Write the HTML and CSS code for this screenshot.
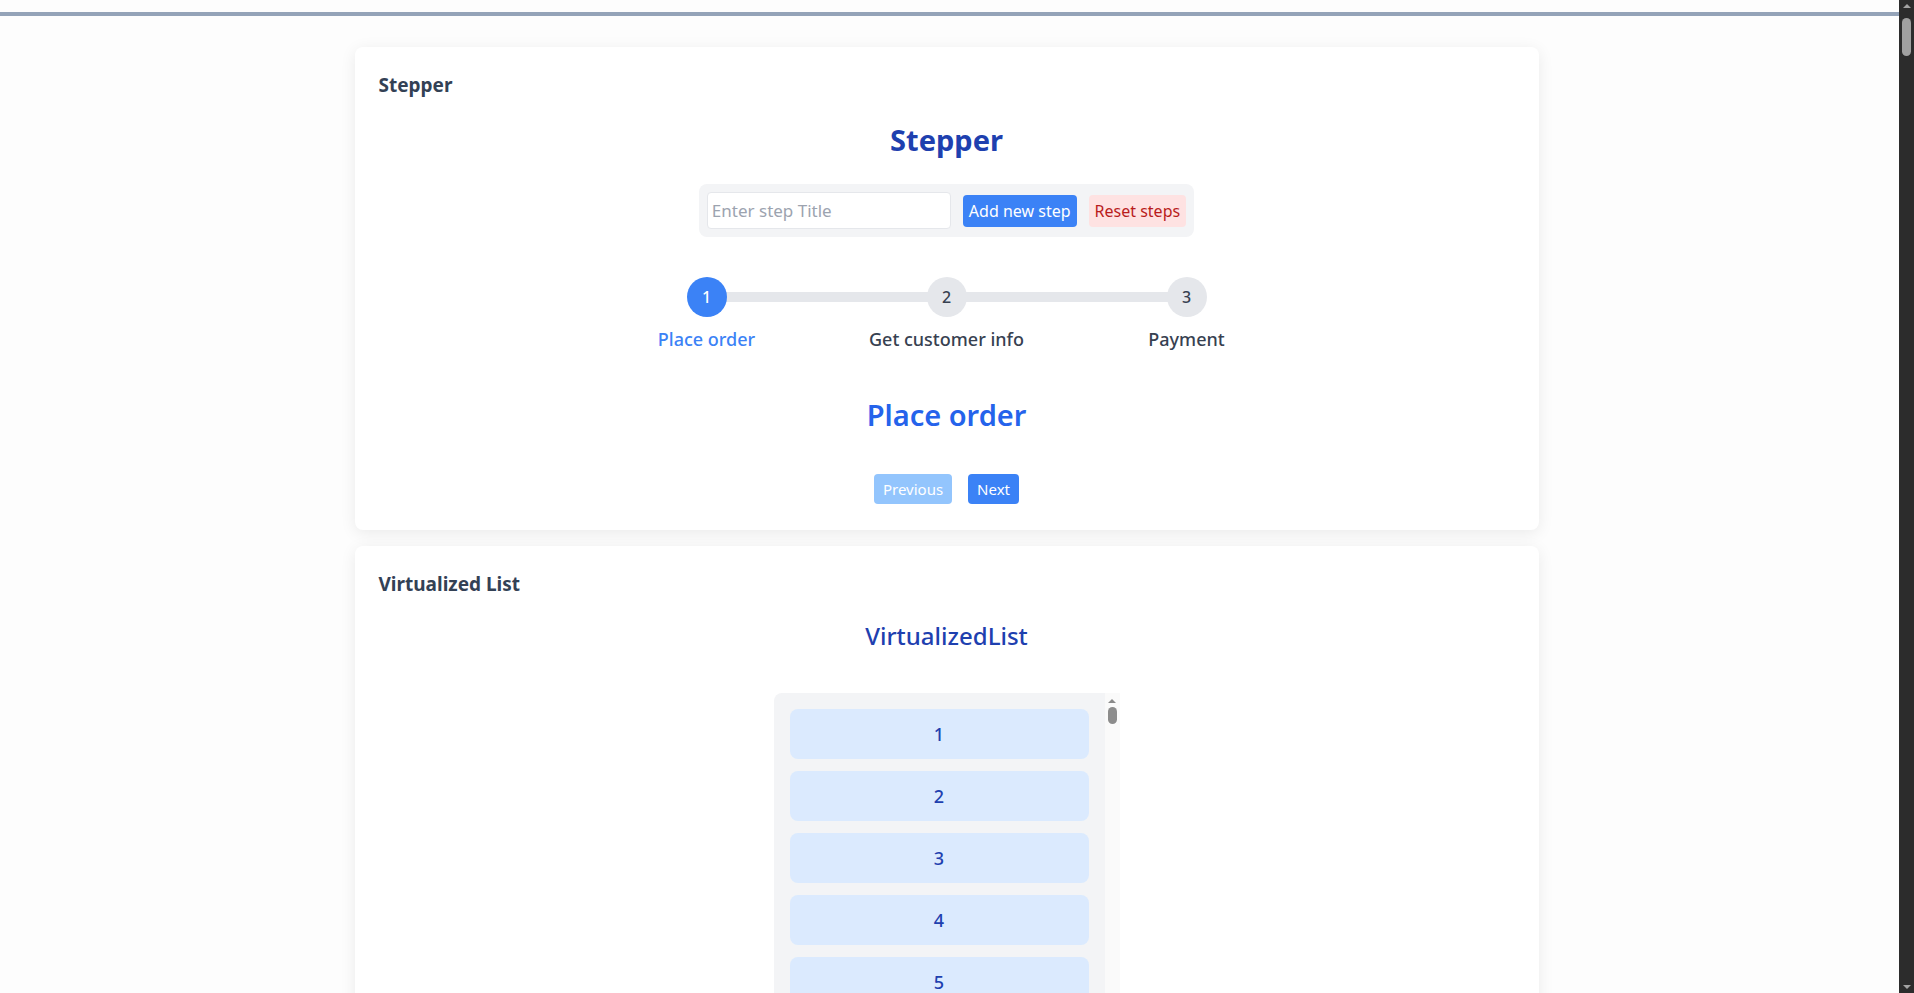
FILE: index.html
```html
<!DOCTYPE html>
<html lang="en">
<head>
<meta charset="utf-8">
<title>Components</title>
<link rel="stylesheet" href="styles.css">
</head>
<body>
<div class="topbar"></div>
<main class="container">
  <section class="card">
    <h2 class="card-label">Stepper</h2>
    <h1 class="demo-title">Stepper</h1>
    <div class="add-bar">
      <input class="step-input" type="text" placeholder="Enter step Title">
      <button class="btn btn-primary">Add new step</button>
      <button class="btn btn-reset">Reset steps</button>
    </div>
    <ol class="steps">
      <li class="step active"><span class="step-num">1</span><span class="step-label">Place order</span></li>
      <li class="step"><span class="step-num">2</span><span class="step-label">Get customer info</span></li>
      <li class="step"><span class="step-num">3</span><span class="step-label">Payment</span></li>
    </ol>
    <h2 class="step-content">Place order</h2>
    <div class="nav">
      <button class="btn btn-nav btn-disabled">Previous</button>
      <button class="btn btn-nav btn-primary">Next</button>
    </div>
  </section>
  <section class="card">
    <h2 class="card-label">Virtualized List</h2>
    <h2 class="vl-title">VirtualizedList</h2>
    <div class="vlist">
      <div class="vlist-items">
        <div class="item">1</div>
        <div class="item">2</div>
        <div class="item">3</div>
        <div class="item">4</div>
        <div class="item">5</div>
        <div class="item">6</div>
        <div class="item">7</div>
        <div class="item">8</div>
      </div>
      <div class="vscroll">
        <span class="vscroll-up"></span>
        <span class="vscroll-thumb"></span>
      </div>
    </div>
  </section>
</main>
<div class="page-scrollbar">
  <span class="psb-up"></span>
  <span class="psb-thumb"></span>
  <span class="psb-down"></span>
</div>
</body>
</html>
```
FILE: styles.css
```css
body {
  margin: 0 15px 0 0;
  background: #fdfdfd;
  font-family: "Noto Sans", "Open Sans", sans-serif;
  color: #374151;
}

.topbar {
  height: 4px;
  margin-top: 12px;
  background: #94a3b8;
}

.container {
  width: 1184px;
  margin: 0 auto 0 calc(50% - 595px);
  padding: 31px 0 40px;
  display: flex;
  flex-direction: column;
  gap: 16px;
}

.card {
  background: #ffffff;
  border-radius: 8px;
  box-shadow: 0 3px 16px rgba(0, 0, 0, 0.08);
  padding: 24px 24px 26px;
}

.card-label {
  margin: 0;
  font-size: 19px;
  line-height: 28px;
  font-weight: 700;
  color: #334155;
}

.demo-title {
  margin: 23px 0 0;
  text-align: center;
  font-size: 29px;
  line-height: 36px;
  font-weight: 700;
  color: #1e40af;
}

.add-bar {
  display: flex;
  align-items: center;
  gap: 12px;
  width: fit-content;
  margin: 26px auto 0;
  padding: 8px;
  background: #f3f4f6;
  border-radius: 8px;
}

.step-input {
  width: 244px;
  height: 37px;
  box-sizing: border-box;
  padding: 0 4px;
  border: 1px solid #e5e7eb;
  border-radius: 4px;
  background: #ffffff;
  color: #111827;
  font-family: inherit;
  font-size: 17px;
  outline: none;
}

.step-input::placeholder {
  color: #9ca3af;
}

.btn {
  font-family: inherit;
  font-size: 16px;
  height: 32px;
  padding: 0 6px;
  border: 0;
  border-radius: 4px;
  cursor: pointer;
}

.btn-primary {
  background: #3b82f6;
  color: #ffffff;
}

.btn-reset {
  background: #fee2e2;
  color: #b91c1c;
}

.btn-disabled {
  background: #93c5fd;
  color: #ffffff;
}

.steps {
  list-style: none;
  margin: 40px auto 0;
  padding: 0;
  width: 720px;
  display: flex;
}

.step {
  flex: 1;
  position: relative;
  display: flex;
  flex-direction: column;
  align-items: center;
  gap: 8px;
}

.step:not(:last-child)::after {
  content: "";
  position: absolute;
  top: 15px;
  left: 50%;
  width: 100%;
  height: 10px;
  background: #e5e7eb;
}

.step-num {
  position: relative;
  z-index: 1;
  width: 40px;
  height: 40px;
  border-radius: 50%;
  background: #e5e7eb;
  color: #374151;
  display: flex;
  align-items: center;
  justify-content: center;
  font-size: 16px;
  font-weight: 500;
}

.step-label {
  font-size: 18px;
  line-height: 28px;
  font-weight: 500;
  color: #374151;
}

.step.active .step-num {
  background: #3b82f6;
  color: #ffffff;
}

.step.active .step-label {
  color: #3b82f6;
}

.step-content {
  margin: 42px 0 0;
  text-align: center;
  font-size: 29px;
  line-height: 40px;
  font-weight: 600;
  color: #2563eb;
}

.nav {
  display: flex;
  justify-content: center;
  gap: 16px;
  margin-top: 39px;
}

.btn-nav {
  height: 30px;
  font-size: 15px;
  padding: 0 9px;
}

.vl-title {
  margin: 22px 0 0;
  text-align: center;
  font-size: 24px;
  line-height: 32px;
  font-weight: 500;
  color: #1e40af;
}

.vlist {
  width: 346px;
  height: 500px;
  margin: 41px auto 0;
  display: flex;
}

.vlist-items {
  flex: 1;
  overflow: hidden;
  box-sizing: border-box;
  padding: 16px;
  background: #f3f4f6;
  border-radius: 8px 0 0 0;
  display: flex;
  flex-direction: column;
  gap: 12px;
}

.item {
  flex: 0 0 50px;
  display: flex;
  align-items: center;
  justify-content: center;
  background: #dbeafe;
  border-radius: 8px;
  color: #1e40af;
  font-size: 18px;
  font-weight: 500;
}

.vscroll {
  width: 15px;
  background: #fafafa;
  display: flex;
  flex-direction: column;
  align-items: center;
  padding-top: 6px;
  gap: 4px;
}

.vscroll-up {
  width: 0;
  height: 0;
  border-left: 4px solid transparent;
  border-right: 4px solid transparent;
  border-bottom: 4px solid #8a8a8a;
}

.vscroll-thumb {
  width: 9px;
  height: 17px;
  border-radius: 5px;
  background: #8c8c8c;
}

.page-scrollbar {
  position: fixed;
  top: 0;
  right: 0;
  width: 15px;
  height: 100vh;
  background: #2c2c2c;
  display: flex;
  flex-direction: column;
  align-items: center;
}

.psb-up,
.psb-down {
  width: 0;
  height: 0;
  border-left: 4px solid transparent;
  border-right: 4px solid transparent;
}

.psb-up {
  margin-top: 4px;
  border-bottom: 4px solid #a3a3a3;
}

.psb-down {
  margin-top: auto;
  margin-bottom: 4px;
  border-top: 4px solid #a3a3a3;
}

.psb-thumb {
  margin-top: 10px;
  width: 9px;
  height: 38px;
  border-radius: 5px;
  background: #a0a0a0;
}
```
